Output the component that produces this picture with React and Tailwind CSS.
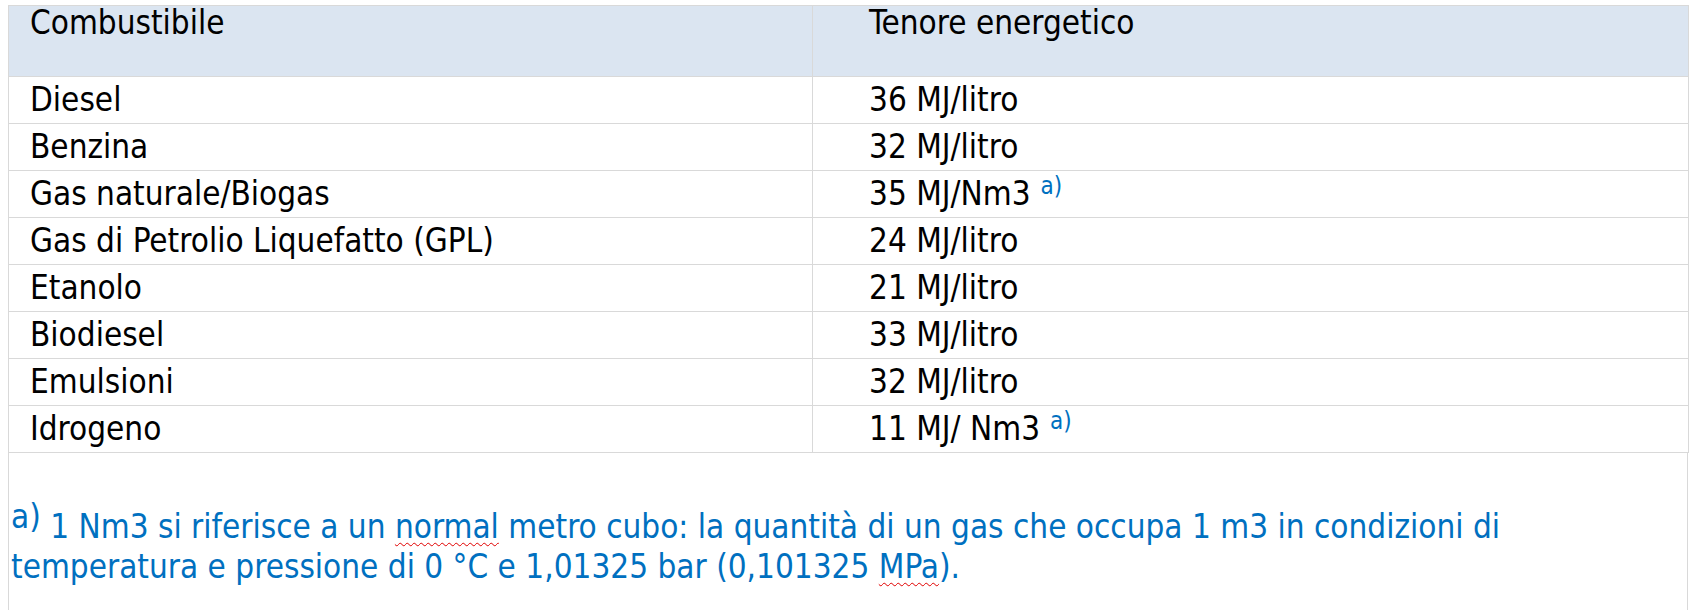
import React from "react";

const rows = [
  ["Diesel", "36 MJ/litro", false],
  ["Benzina", "32 MJ/litro", false],
  ["Gas naturale/Biogas", "35 MJ/Nm3", true],
  ["Gas di Petrolio Liquefatto (GPL)", "24 MJ/litro", false],
  ["Etanolo", "21 MJ/litro", false],
  ["Biodiesel", "33 MJ/litro", false],
  ["Emulsioni", "32 MJ/litro", false],
  ["Idrogeno", "11 MJ/ Nm3", true],
];

export default function App() {
  return (
    <div
      className="w-[1692px] h-[610px] overflow-hidden bg-white pt-[5px] pl-[8px] text-black"
      style={{ fontFamily: '"DejaVu Sans Condensed", "DejaVu Sans", Tahoma, sans-serif' }}
    >
      <table className="w-[1680px] border-collapse table-fixed text-[33px]">
        <colgroup>
          <col className="w-[804px]" />
          <col className="w-[876px]" />
        </colgroup>
        <thead>
          <tr className="bg-[#dbe5f1] h-[71px]">
            <th className="border border-[#d9d9d9] align-top text-left font-normal pl-[21px] pt-0 leading-[34px]">
              Combustibile
            </th>
            <th className="border border-[#d9d9d9] align-top text-left font-normal pl-[56px] pt-0 leading-[34px]">
              Tenore energetico
            </th>
          </tr>
        </thead>
        <tbody>
          {rows.map(([a, b, sup]) => (
            <tr key={a} className="h-[47px]">
              <td className="border border-[#d9d9d9] pl-[21px] p-0 h-[47px] leading-[46px] whitespace-nowrap">{a}</td>
              <td className="border border-[#d9d9d9] pl-[56px] p-0 h-[47px] leading-[46px] whitespace-nowrap">
                {b}
                <span className={sup ? "relative -top-[11px] ml-[10px] text-[24px] leading-none text-[#0070c0]" : "hidden"}>a)</span>
              </td>
            </tr>
          ))}
        </tbody>
      </table>
      <div className="w-[1680px] h-[200px] border-l border-r border-[#d9d9d9] pt-[54px] pl-[2px] text-[33px] leading-[40px] text-[#0070c0] whitespace-nowrap">
        <span className="relative -top-[10px]">a)</span> 1 Nm3 si riferisce a un{" "}
        <span className="underline decoration-wavy decoration-[#e00000] decoration-1 underline-offset-[4px]">normal</span>{" "}
        metro cubo: la quantità di un gas che occupa 1 m3 in condizioni di
        <br />
        temperatura e pressione di 0 °C e 1,01325 bar (0,101325{" "}
        <span className="underline decoration-wavy decoration-[#e00000] decoration-1 underline-offset-[4px]">MPa</span>).
      </div>
    </div>
  );
}
